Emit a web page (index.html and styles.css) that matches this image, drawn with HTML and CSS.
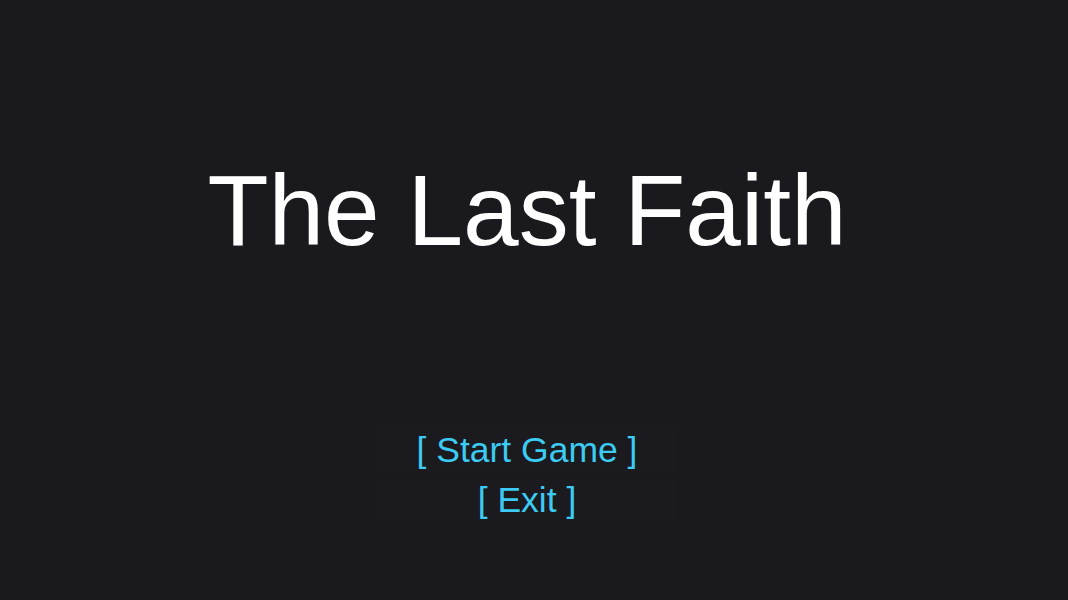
FILE: index.html
```html
<!DOCTYPE html>
<html>
<head>
<meta charset="utf-8">
<link rel="stylesheet" href="styles.css">
</head>
<body>
<main class="screen">
  <h1 class="title">The Last Faith</h1>
  <nav class="menu">
    <button class="menu-item">[ Start Game ]</button>
    <button class="menu-item">[ Exit ]</button>
  </nav>
</main>
</body>
</html>
```
FILE: styles.css
```css
html, body {
  margin: 0;
  padding: 0;
  background: #1a191e;
  height: 100%;
}
.screen {
  height: 600px;
  display: flex;
  flex-direction: column;
  align-items: center;
  padding-right: 14px;
  font-family: "Liberation Sans", Arial, sans-serif;
}
.title {
  margin: 160px 0 0 0;
  font-size: 100px;
  line-height: 1;
  font-weight: normal;
  color: #ffffff;
}
.menu {
  margin-top: 168px;
  display: flex;
  flex-direction: column;
  gap: 6px;
}
.menu-item {
  width: 300px;
  height: 44px;
  padding: 0;
  border: none;
  background: #1b1a1f;
  color: #3ccbf2;
  font-family: "Liberation Sans", Arial, sans-serif;
  font-size: 35.5px;
  line-height: 44px;
  cursor: pointer;
}
```
